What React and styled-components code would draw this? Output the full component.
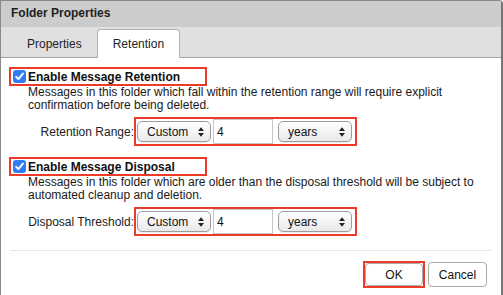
import React from 'react';
import styled, { createGlobalStyle } from 'styled-components';

const GlobalStyle = createGlobalStyle`
  html, body {
    margin: 0;
    padding: 0;
    background: #fff;
  }
  body {
    font-family: "Liberation Sans", Arial, Helvetica, sans-serif;
    font-size: 12px;
    color: #111;
  }
`;

const Dialog = styled.div`
  width: 503px;
  height: 295px;
  box-sizing: border-box;
  border-top: 1px solid #8a8a8a;
  border-left: 1px solid #8a8a8a;
  border-right: 2px solid #777;
  border-top-right-radius: 4px;
  display: flex;
  flex-direction: column;
  overflow: hidden;
  background: #fff;
`;

const TitleBar = styled.div`
  height: 26px;
  box-sizing: border-box;
  padding: 0 0 2px 10px;
  display: flex;
  align-items: center;
  background: #cccccc;
  font-weight: bold;
  color: #222;
`;

const TabBar = styled.div`
  height: 31px;
  box-sizing: border-box;
  display: flex;
  align-items: flex-end;
  padding-left: 11px;
  background: #e0e0e0;
  border-bottom: 1px solid #a3a3a3;
`;

const Tab = styled.div`
  height: 29px;
  box-sizing: border-box;
  margin-bottom: -1px;
  padding: 0 ${props => props.active ? 15 : 14}px;
  display: flex;
  align-items: center;
  color: #222;
  background: ${props => props.active ? '#fff' : 'transparent'};
  border: 1px solid ${props => props.active ? '#b4b4b4' : 'transparent'};
  border-bottom: none;
  border-radius: 4px 4px 0 0;
`;

const Content = styled.div`
  flex: 1;
  display: flex;
  flex-direction: column;
  padding: 9px 9px 0 8px;
`;

const Section = styled.div`
  display: flex;
  flex-direction: column;
  margin-top: ${props => props.first ? '0' : '11px'};
`;

const Highlight = styled.div`
  display: inline-flex;
  align-items: center;
  box-sizing: border-box;
  border: 2px solid #ec3b28;
`;

const CheckLabel = styled(Highlight)`
  width: 198px;
  height: 19px;
  padding-left: 2px;
  gap: 2px;
  font-weight: bold;
  color: #111;
`;

const CheckBox = styled.span`
  width: 13px;
  height: 13px;
  border-radius: 3px;
  background: #2f7cf5;
  display: flex;
  align-items: center;
  justify-content: center;
`;

const Description = styled.div`
  padding-left: 19px;
  line-height: 13px;
  color: #1a1a1a;
`;

const FieldRow = styled.div`
  display: flex;
  align-items: center;
  margin-top: 5px;
`;

const FieldLabel = styled.div`
  width: 125px;
  text-align: right;
  color: #222;
  white-space: nowrap;
`;

const Controls = styled(Highlight)`
  height: 29px;
  padding: 0 3px 0 1px;
`;

const Select = styled.div`
  width: 74px;
  height: 21px;
  box-sizing: border-box;
  margin-left: ${props => props.gap || 0}px;
  padding: 0 6px 0 9px;
  display: flex;
  align-items: center;
  justify-content: space-between;
  border: 1px solid #9c9c9c;
  border-radius: 5px;
  background: linear-gradient(#ffffff, #e9e9e9);
  box-shadow: 0 1px 1px rgba(0, 0, 0, 0.08);
  color: #111;
`;

const NumberInput = styled.input`
  width: 60px;
  height: 25px;
  box-sizing: border-box;
  margin: 0 0 0 2px;
  padding: 0 3px;
  border: 1px solid #c6c6c6;
  border-radius: 0;
  font: inherit;
  color: #111;
  outline: none;
`;

const Separator = styled.div`
  height: 1px;
  margin: 14px 0 0 1px;
  background: #e6e6e6;
`;

const Footer = styled.div`
  display: flex;
  justify-content: flex-end;
  align-items: center;
  margin-top: 10px;
  padding-right: 5px;
`;

const Button = styled.div`
  width: ${props => props.w}px;
  height: ${props => props.h}px;
  box-sizing: border-box;
  margin-left: ${props => props.gap || 0}px;
  display: flex;
  align-items: center;
  justify-content: center;
  border: 1px solid #ababab;
  border-radius: 4px;
  background: #fff;
  color: #111;
`;

const Arrows = () => (
  <svg width="6" height="10" viewBox="0 0 6 10">
    <path d="M0 4 L3 0.3 L6 4 Z M0 6 L3 9.7 L6 6 Z" fill="#222" />
  </svg>
);

const Check = () => (
  <svg width="13" height="13" viewBox="0 0 13 13">
    <path d="M3.2 6.8 L5.4 9.1 L9.9 3.6" fill="none" stroke="#fff" strokeWidth="1.9" strokeLinecap="round" strokeLinejoin="round" />
  </svg>
);

const sections = [
  {
    title: 'Enable Message Retention',
    text: ['Messages in this folder which fall within the retention range will require explicit', 'confirmation before being deleted.'],
    label: 'Retention Range:'
  },
  {
    title: 'Enable Message Disposal',
    text: ['Messages in this folder which are older than the disposal threshold will be subject to', 'automated cleanup and deletion.'],
    label: 'Disposal Threshold:'
  }
];

export default function App() {
  return (
    <>
      <GlobalStyle />
      <Dialog>
        <TitleBar>Folder Properties</TitleBar>
        <TabBar>
          <Tab>Properties</Tab>
          <Tab active>Retention</Tab>
        </TabBar>
        <Content>
          {sections.map((s, i) => (
            <Section key={s.title} first={i === 0}>
              <div>
                <CheckLabel>
                  <CheckBox><Check /></CheckBox>
                  {s.title}
                </CheckLabel>
              </div>
              <Description>
                {s.text.map(line => <div key={line}>{line}</div>)}
              </Description>
              <FieldRow>
                <FieldLabel>{s.label}</FieldLabel>
                <Controls>
                  <Select>Custom<Arrows /></Select>
                  <NumberInput value="4" readOnly />
                  <Select gap={5}>years<Arrows /></Select>
                </Controls>
              </FieldRow>
            </Section>
          ))}
          <Separator />
          <Footer>
            <Highlight>
              <Button w={58} h={23}>OK</Button>
            </Highlight>
            <Button w={59} h={25} gap={3}>Cancel</Button>
          </Footer>
        </Content>
      </Dialog>
    </>
  );
}
